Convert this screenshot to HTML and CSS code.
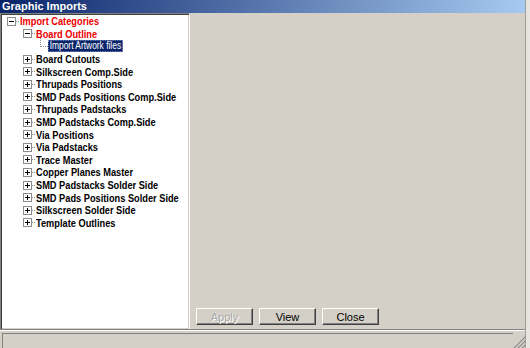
FILE: index.html
```html
<!DOCTYPE html>
<html lang="en">
<head>
  <meta charset="UTF-8">
  <title>Graphic Imports</title>
  <link rel="stylesheet" href="styles.css">
</head>
<body>

  <div class="window">
    <div class="titlebar">Graphic Imports</div>

    <div class="main">
      <!-- Category tree -->
      <div class="tree">
        <div class="row level-0"><span class="toggle minus"></span><span class="stub"></span><span class="label red">Import Categories</span></div>
        <div class="row level-1"><span class="toggle minus"></span><span class="stub"></span><span class="label red">Board Outline</span></div>
        <div class="row level-2"><span class="branch"></span><span class="label selected">Import Artwork files</span></div>
        <div class="row level-1"><span class="toggle plus"></span><span class="stub"></span><span class="label">Board Cutouts</span></div>
        <div class="row level-1"><span class="toggle plus"></span><span class="stub"></span><span class="label">Silkscreen Comp.Side</span></div>
        <div class="row level-1"><span class="toggle plus"></span><span class="stub"></span><span class="label">Thrupads Positions</span></div>
        <div class="row level-1"><span class="toggle plus"></span><span class="stub"></span><span class="label">SMD Pads Positions Comp.Side</span></div>
        <div class="row level-1"><span class="toggle plus"></span><span class="stub"></span><span class="label">Thrupads Padstacks</span></div>
        <div class="row level-1"><span class="toggle plus"></span><span class="stub"></span><span class="label">SMD Padstacks Comp.Side</span></div>
        <div class="row level-1"><span class="toggle plus"></span><span class="stub"></span><span class="label">Via Positions</span></div>
        <div class="row level-1"><span class="toggle plus"></span><span class="stub"></span><span class="label">Via Padstacks</span></div>
        <div class="row level-1"><span class="toggle plus"></span><span class="stub"></span><span class="label">Trace Master</span></div>
        <div class="row level-1"><span class="toggle plus"></span><span class="stub"></span><span class="label">Copper Planes Master</span></div>
        <div class="row level-1"><span class="toggle plus"></span><span class="stub"></span><span class="label">SMD Padstacks Solder Side</span></div>
        <div class="row level-1"><span class="toggle plus"></span><span class="stub"></span><span class="label">SMD Pads Positions Solder Side</span></div>
        <div class="row level-1"><span class="toggle plus"></span><span class="stub"></span><span class="label">Silkscreen Solder Side</span></div>
        <div class="row level-1"><span class="toggle plus"></span><span class="stub"></span><span class="label">Template Outlines</span></div>
      </div>

      <div class="side">
        <div class="buttons">
          <button class="btn" disabled>Apply</button>
          <button class="btn">View</button>
          <button class="btn">Close</button>
        </div>
      </div>
    </div>

    <div class="statusbar">
      <div class="status-panel"></div>
      <svg class="grip" viewBox="0 0 12 12" xmlns="http://www.w3.org/2000/svg">
        <path d="M11 1L1 11M11 5L5 11M11 9L9 11" stroke="#ffffff" stroke-width="1"/>
        <path d="M12 1L1 12M12 5L5 12M12 9L9 12" stroke="#808080" stroke-width="1.2"/>
      </svg>
    </div>
  </div>

</body>
</html>
```

FILE: styles.css
```css
body {
  margin: 0;
  background: #e6e4de;
  font-family: "Liberation Sans", Arial, sans-serif;
}

.window {
  width: 525px;
  height: 348px;
  background: #d4d0c8;
  border-right: 1px solid #a09d96;
  display: flex;
  flex-direction: column;
  overflow: hidden;
}

.titlebar {
  height: 13px;
  line-height: 13px;
  padding-left: 2px;
  color: white;
  font-size: 11px;
  font-weight: bold;
  background: linear-gradient(to right, #0a246a, #a6caf0);
}

.main {
  display: flex;
  height: 316px;
}

/* tree view */
.tree {
  width: 188px;
  height: 314px;
  background: white;
  border-top: 1px solid #808080;
  border-left: 1px solid #808080;
  border-right: 1px solid #ffffff;
  border-bottom: 1px solid #ffffff;
  box-shadow: inset 1px 1px #404040, inset -1px -1px #d4d0c8;
  padding-top: 1px;
  box-sizing: content-box;
}

.row {
  display: flex;
  align-items: center;
  height: 12.6px;
  white-space: nowrap;
}

.level-0 {
  padding-left: 6px;
}

.level-1 {
  padding-left: 22px;
}

.level-2 {
  padding-left: 39px;
}

.toggle {
  width: 7px;
  height: 7px;
  border: 1px solid #8c8c8c;
  background: white;
  position: relative;
  flex-shrink: 0;
}

.toggle::before {
  content: "";
  position: absolute;
  left: 1px;
  top: 3px;
  width: 5px;
  height: 1px;
  background: #000;
}

.toggle.plus::after {
  content: "";
  position: absolute;
  left: 3px;
  top: 1px;
  width: 1px;
  height: 5px;
  background: #000;
}

.stub {
  width: 3px;
  margin-right: 1px;
  border-top: 1px dotted #909090;
  flex-shrink: 0;
}

/* the original uses a condensed bitmap font */
.label {
  display: inline-block;
  font-size: 11px;
  font-weight: bold;
  color: #000;
  transform: scaleX(0.84);
  transform-origin: left center;
}

.label.red {
  color: #ee0000;
}

.branch {
  width: 7px;
  height: 9px;
  align-self: flex-start;
  margin-top: -3px;
  border-left: 1px dotted #909090;
  border-bottom: 1px dotted #909090;
  flex-shrink: 0;
}

.label.selected {
  font-weight: normal;
  font-size: 10px;
  background: #0a246a;
  color: white;
  height: 12px;
  line-height: 12px;
  padding: 0 2px;
  outline: 1px dotted #8090c0;
  outline-offset: -1px;
}

/* right side with buttons */
.side {
  flex: 1;
  display: flex;
  flex-direction: column;
  justify-content: flex-end;
  padding: 0 0 4px 6px;
}

.buttons {
  display: flex;
  gap: 6px;
}

.btn {
  width: 57px;
  height: 17px;
  padding: 0;
  background: #d4d0c8;
  font-family: "Liberation Sans", Arial, sans-serif;
  font-size: 11px;
  color: #000;
  border-top: 1px solid #ffffff;
  border-left: 1px solid #ffffff;
  border-right: 1px solid #404040;
  border-bottom: 1px solid #404040;
  box-shadow: inset -1px -1px #808080;
}

.btn:disabled {
  color: #a8a8a8;
  text-shadow: 1px 1px #ffffff;
}

/* status bar */
.statusbar {
  flex: 1;
  display: flex;
  align-items: flex-end;
  border-top: 1px solid #808080;
  box-shadow: inset 0 1px #ffffff;
  padding: 3px 0 0 2px;
}

.status-panel {
  flex: 1;
  height: 14px;
  border-top: 1px solid #808080;
  border-left: 1px solid #808080;
}

.grip {
  width: 12px;
  height: 12px;
}
```
